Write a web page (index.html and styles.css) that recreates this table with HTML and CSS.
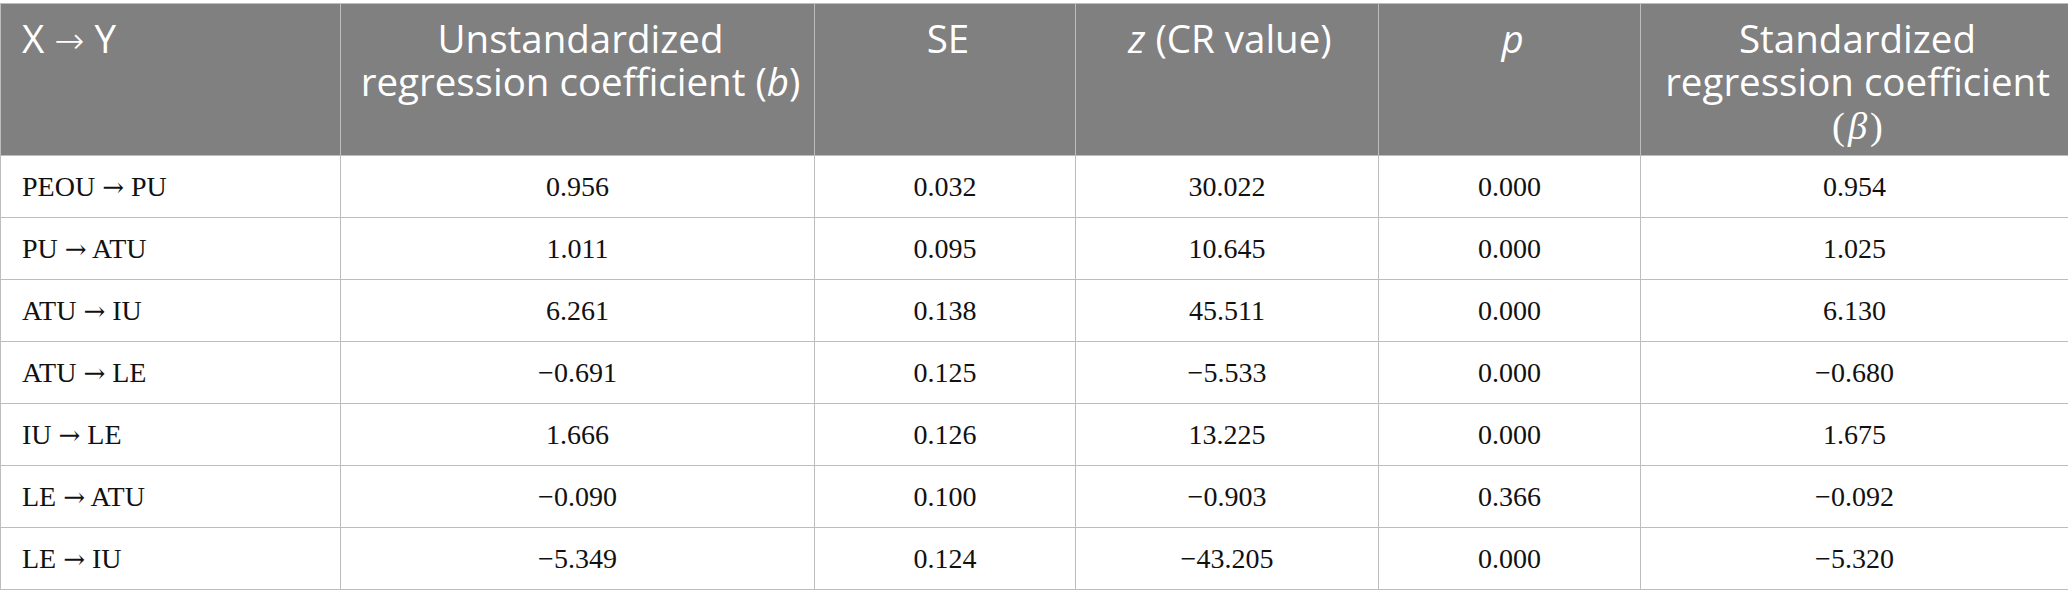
FILE: index.html
```html
<!DOCTYPE html>
<html>
<head>
<meta charset="utf-8">
<link rel="stylesheet" href="styles.css">
</head>
<body>
<table class="reg">
  <colgroup>
    <col class="c1"><col class="c2"><col class="c3"><col class="c4"><col class="c5"><col class="c6">
  </colgroup>
  <thead>
    <tr>
      <th class="left">X <span class="arr">→</span> Y</th>
      <th>Unstandardized regression coefficient (<i>b</i>)</th>
      <th>SE</th>
      <th><i>z</i> (CR value)</th>
      <th><i>p</i></th>
      <th>Standardized regression coefficient <span class="beta">(<i>β</i>)</span></th>
    </tr>
  </thead>
  <tbody>
    <tr><td class="left">PEOU <span class="arr">→</span> PU</td><td>0.956</td><td>0.032</td><td>30.022</td><td>0.000</td><td>0.954</td></tr>
    <tr><td class="left">PU <span class="arr">→</span> ATU</td><td>1.011</td><td>0.095</td><td>10.645</td><td>0.000</td><td>1.025</td></tr>
    <tr><td class="left">ATU <span class="arr">→</span> IU</td><td>6.261</td><td>0.138</td><td>45.511</td><td>0.000</td><td>6.130</td></tr>
    <tr><td class="left">ATU <span class="arr">→</span> LE</td><td>−0.691</td><td>0.125</td><td>−5.533</td><td>0.000</td><td>−0.680</td></tr>
    <tr><td class="left">IU <span class="arr">→</span> LE</td><td>1.666</td><td>0.126</td><td>13.225</td><td>0.000</td><td>1.675</td></tr>
    <tr><td class="left">LE <span class="arr">→</span> ATU</td><td>−0.090</td><td>0.100</td><td>−0.903</td><td>0.366</td><td>−0.092</td></tr>
    <tr><td class="left">LE <span class="arr">→</span> IU</td><td>−5.349</td><td>0.124</td><td>−43.205</td><td>0.000</td><td>−5.320</td></tr>
  </tbody>
</table>
</body>
</html>
```
FILE: styles.css
```css
html, body {
  margin: 0;
  padding: 0;
  background: #ffffff;
}
body {
  padding-top: 3px;
}
.reg {
  border-collapse: collapse;
  table-layout: fixed;
  width: 2068px;
}
.c1 { width: 340px; }
.c2 { width: 474px; }
.c3 { width: 261px; }
.c4 { width: 303px; }
.c5 { width: 262px; }
.c6 { width: 428px; }

.reg th, .reg td {
  border: 1px solid #bdbdbd;
  text-align: center;
}
.reg th {
  background: #7f807f;
  color: #ffffff;
  font-family: "Open Sans", "Noto Sans", sans-serif;
  font-weight: 400;
  font-size: 38.5px;
  line-height: 43px;
  height: 152px;
  box-sizing: border-box;
  vertical-align: top;
  padding: 13px 8px 0 14px;
}
.reg td {
  font-family: "Liberation Serif", "Times New Roman", serif;
  font-size: 28px;
  color: #111111;
  height: 62px;
  box-sizing: border-box;
  padding: 0 20px;
  vertical-align: middle;
}
.reg .left {
  text-align: left;
  padding-left: 21px;
}
.reg td .arr {
  font-family: "DejaVu Serif", serif;
  font-size: 26px;
}
.reg th .arr {
  font-family: "DejaVu Sans", sans-serif;
  font-weight: 200;
  font-size: 36px;
}
.beta {
  font-family: "Liberation Serif", serif;
}
.beta i {
  padding: 0 3px 0 3px;
}
```
